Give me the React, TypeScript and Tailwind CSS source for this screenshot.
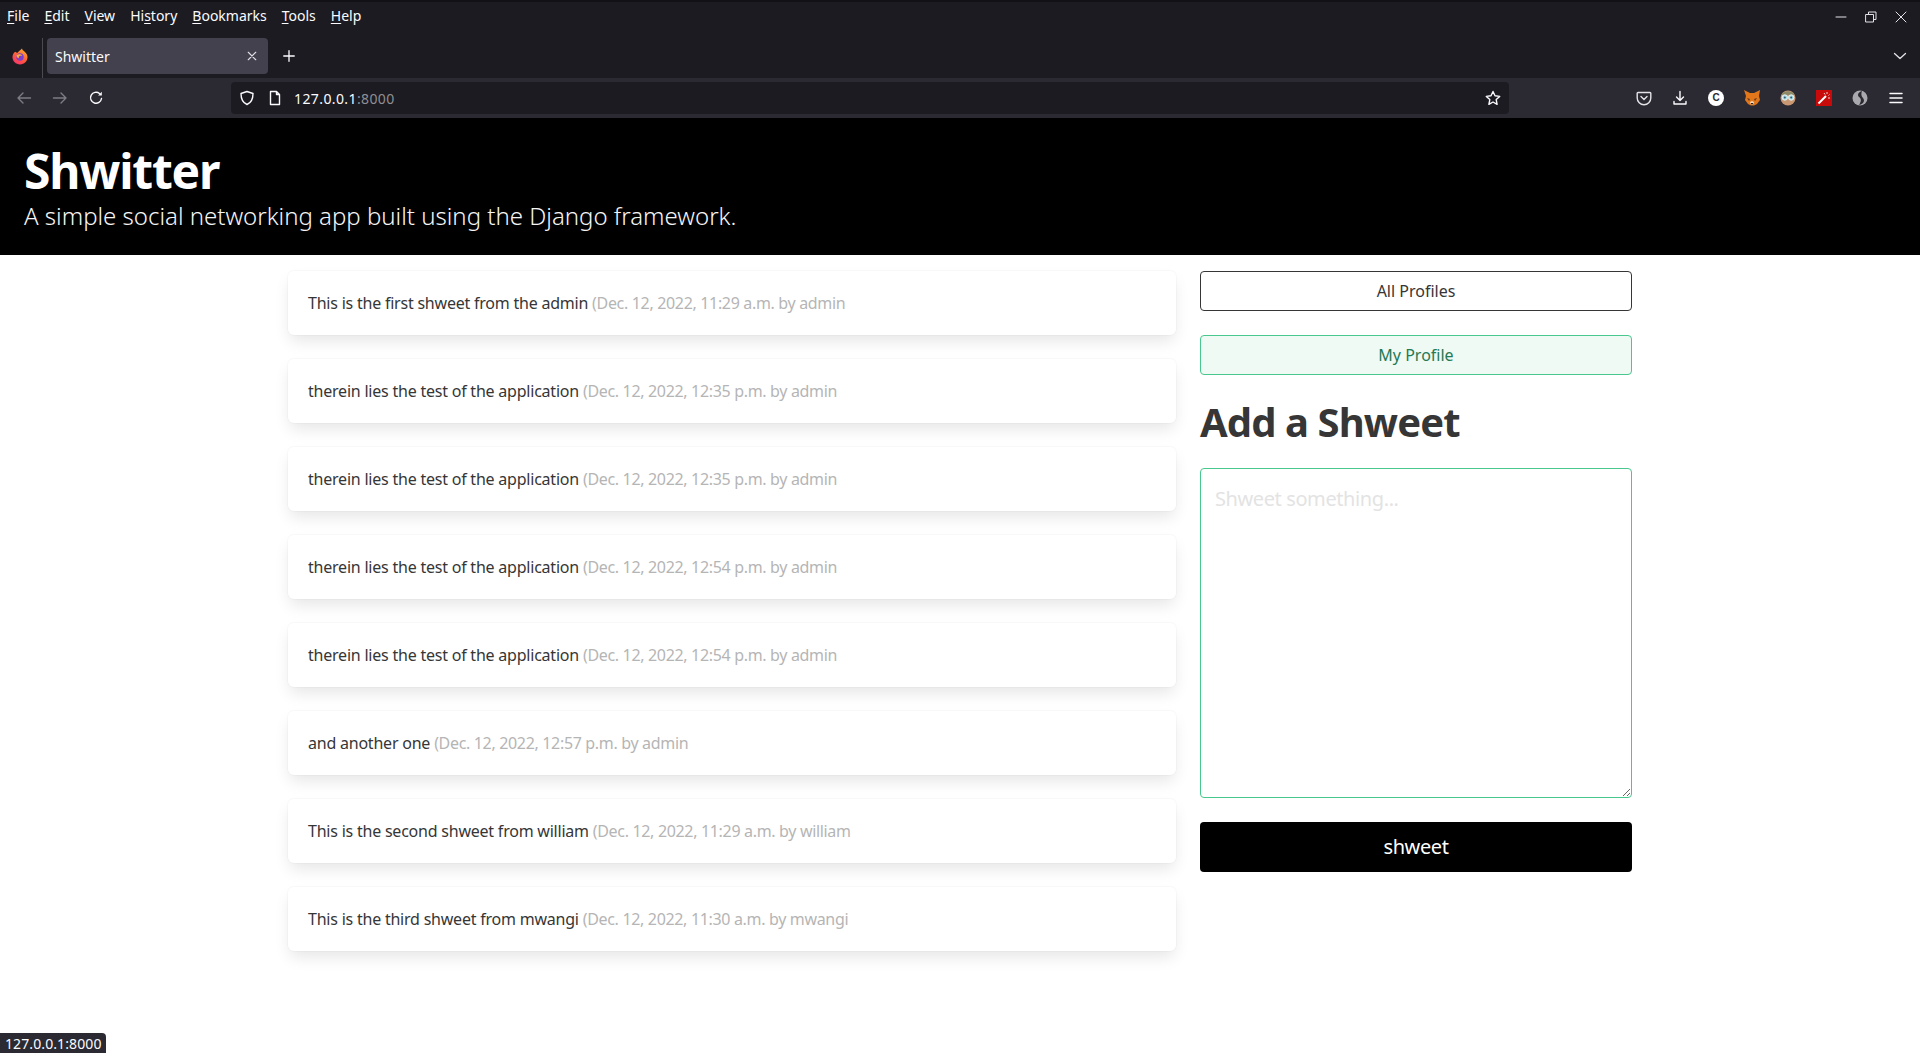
const menus = [
  { before: '', key: 'F', after: 'ile' },
  { before: '', key: 'E', after: 'dit' },
  { before: '', key: 'V', after: 'iew' },
  { before: 'Hi', key: 's', after: 'tory' },
  { before: '', key: 'B', after: 'ookmarks' },
  { before: '', key: 'T', after: 'ools' },
  { before: '', key: 'H', after: 'elp' },
];

const shweets = [
  { text: 'This is the first shweet from the admin', meta: '(Dec. 12, 2022, 11:29 a.m. by admin' },
  { text: 'therein lies the test of the application', meta: '(Dec. 12, 2022, 12:35 p.m. by admin' },
  { text: 'therein lies the test of the application', meta: '(Dec. 12, 2022, 12:35 p.m. by admin' },
  { text: 'therein lies the test of the application', meta: '(Dec. 12, 2022, 12:54 p.m. by admin' },
  { text: 'therein lies the test of the application', meta: '(Dec. 12, 2022, 12:54 p.m. by admin' },
  { text: 'and another one', meta: '(Dec. 12, 2022, 12:57 p.m. by admin' },
  { text: 'This is the second shweet from william', meta: '(Dec. 12, 2022, 11:29 a.m. by william' },
  { text: 'This is the third shweet from mwangi', meta: '(Dec. 12, 2022, 11:30 a.m. by mwangi' },
];

const Stroke = ({ children, size = 16, color = '#fbfbfe', width = 1.4 }: { children: React.ReactNode; size?: number; color?: string; width?: number }) => (
  <svg width={size} height={size} viewBox="0 0 16 16" fill="none" stroke={color} strokeWidth={width} strokeLinecap="round" strokeLinejoin="round">
    {children}
  </svg>
);

const FirefoxLogo = () => (
  <svg width="16" height="17" viewBox="0 0 16 17">
    <defs>
      <linearGradient id="ffBody" x1="0.8" y1="0" x2="0.2" y2="1">
        <stop offset="0%" stopColor="#ffb02e" />
        <stop offset="55%" stopColor="#ff5a3c" />
        <stop offset="100%" stopColor="#f5326e" />
      </linearGradient>
    </defs>
    <path d="M10 0.5c.3 1.5 1.2 2 2.4 3 1.8 1.5 3.1 3.2 3.1 5.6 0 4.2-3.3 7.4-7.5 7.4S.5 13.3.5 9.1C.5 6.6 1.7 4.6 3.4 3.7c.6.7 1.2 1 2.2 1 .8-1.6 2.7-2.2 4.4-4.2z" fill="url(#ffBody)" />
    <circle cx="8" cy="9" r="3.7" fill="#7b3fd0" />
    <path d="M4.6 7c1.6-1.2 4.6-1.2 5.6.6-1 .3-2.3.1-3 .6-.6.4-.7 1.500.1 2.100-1.500.1-3.200-1.500-2.700-3.300z" fill="#ffb02e" />
  </svg>
);

const Fox = () => (
  <svg width="16" height="16" viewBox="0 0 16 16">
    <path d="M0 0l6 3h4l6-3-1 6 1 4-3 4-3 1.500H7L4 14l-3-4 1-4z" fill="#e2761b" />
    <path d="M3 8l3 1-1 2zM13 8l-3 1 1 2z" fill="#5c3a1c" />
    <path d="M6 12l2-1 2 1-1 2.500H7z" fill="#f3d9bd" />
    <path d="M7 13h2v1.200H7z" fill="#23262a" />
  </svg>
);

const Glasses = () => (
  <svg width="16" height="16" viewBox="0 0 16 16">
    <circle cx="8" cy="8" r="7.500" fill="#c99872" />
    <path d="M1.500 5a7.500 7.500 0 0 1 13 0z" fill="#8c8a66" />
    <circle cx="4.800" cy="7.500" r="2.700" fill="#a8dbe4" stroke="#e8f3f5" />
    <circle cx="11.200" cy="7.500" r="2.700" fill="#a8dbe4" stroke="#e8f3f5" />
    <circle cx="4.800" cy="7.500" r="1" fill="#36596a" />
    <circle cx="11.200" cy="7.500" r="1" fill="#36596a" />
  </svg>
);

const Wand = () => (
  <svg width="16" height="16" viewBox="0 0 16 16">
    <rect width="16" height="16" fill="#c80a0a" />
    <path d="M2.500 13.500L10 6" stroke="#fff" strokeWidth="2" />
    <path d="M11 2v2M13.500 4.500l-1 1M14 8h-2M8 3l1 1.500" stroke="#fff" strokeWidth="0.8" />
  </svg>
);

const Simplenote = () => (
  <svg width="16" height="16" viewBox="0 0 16 16">
    <circle cx="8" cy="8" r="7.500" fill="#a9a9ad" />
    <path d="M10 1c-4 1.500-5 4-3 6 2 1.500 3 3.500 0 8 5-1 6-4.500 4-7-2-2-2-4.500-1-7z" fill="#2b2a33" />
  </svg>
);

const GrammarlyC = () => (
  <span className="flex h-4 w-4 items-center justify-center rounded-full bg-white font-['Liberation_Sans',sans-serif] text-[10px] font-bold leading-none text-[#2b2a33]">
    C
  </span>
);

const TitleBar = () => (
  <div className="flex h-[38px] items-center justify-between border-t-2 border-[#121216] pb-[6px] pl-[7px] pr-[11px] text-[14px] text-[#fbfbfe]">
    <div className="flex gap-[15px] pb-[4px]">
      {menus.map((m) => (
        <span key={m.key + m.after}>
          {m.before}
          <span className="underline underline-offset-2">{m.key}</span>
          {m.after}
        </span>
      ))}
    </div>
    <div className="flex items-center gap-[14px]">
      <Stroke color="#e4e4e8" width={1}><path d="M3 8h10" /></Stroke>
      <Stroke color="#e4e4e8" width={1}>
        <rect x="3" y="5.500" width="7.500" height="7.500" />
        <path d="M5.500 5.500V3H13v7.500h-2.500" />
      </Stroke>
      <Stroke color="#e4e4e8" width={1}><path d="M3 3l10 10M13 3L3 13" /></Stroke>
    </div>
  </div>
);

const TabBar = () => (
  <div className="flex h-[40px] items-start pr-[12px]">
    <div className="flex h-full w-[43px] items-center justify-center border-r border-[#4a4a52] pb-[4px] pr-[2px]">
      <FirefoxLogo />
    </div>
    <div className="ml-[4px] flex h-[36px] w-[221px] items-center justify-between rounded-[4px] bg-[#42414d] pl-[8px] pr-[10px] text-[14px] text-[#fbfbfe]">
      <span>Shwitter</span>
      <Stroke size={12} color="#e0e0e6" width={1.5}><path d="M3 3l10 10M13 3L3 13" /></Stroke>
    </div>
    <div className="ml-[14px] flex h-[36px] items-center">
      <Stroke size={14} width={1.5}><path d="M8 2v12M2 8h12" /></Stroke>
    </div>
    <div className="ml-auto flex h-[36px] items-center">
      <Stroke size={16} color="#e4e4e8" width={1.3}><path d="M2.500 5.500L8 10.500l5.500-5" /></Stroke>
    </div>
  </div>
);

const NavBar = () => (
  <div className="flex h-[41px] items-center border-b border-black bg-[#2b2a33] pl-[16px] pr-[16px]">
    <div className="flex items-center gap-[20px]">
      <Stroke color="#7d7c84"><path d="M14.500 8H2M7 3L2 8l5 5" /></Stroke>
      <Stroke color="#7d7c84"><path d="M1.500 8H14M9 3l5 5-5 5" /></Stroke>
      <Stroke>
        <path d="M13.500 8.500a5.500 5.500 0 1 1-2-5" />
        <path d="M13.800 1.800v3.700h-3.700z" fill="#fbfbfe" stroke="none" />
      </Stroke>
    </div>
    <div className="ml-[127px] flex h-[32px] w-[1278px] shrink-0 items-center rounded-[4px] bg-[#1c1b22] pl-[8px] pr-[8px]">
      <Stroke><path d="M8 1.500l6 2c0 5-1 9-6 11-5-2-6-6-6-11z" /></Stroke>
      <span className="ml-[12px]">
        <Stroke><path d="M3.500 1.500h6l3 3v10h-9zM9.500 1.500v3h3" /></Stroke>
      </span>
      <span className="ml-[11px] text-[14px] tracking-[0.4px] text-[#fbfbfe]">
        127.0.0.1<span className="text-[#8f8f94]">:8000</span>
      </span>
      <span className="ml-auto">
        <Stroke><path d="M8 1.500l2 4.300 4.700.6-3.500 3.200.9 4.700L8 12l-4.100 2.300.9-4.700L1.300 6.400 6 5.800z" /></Stroke>
      </span>
    </div>
    <div className="ml-auto flex items-center gap-[20px]">
      <Stroke color="#e4e4e8"><path d="M2 2.500h12a.8.8 0 0 1 .8.8V8a6.800 6.800 0 0 1-13.600 0V3.300a.8.8 0 0 1 .8-.8zM5 6.500l3 3 3-3" /></Stroke>
      <Stroke><path d="M8 1.500v9M4.500 7L8 10.500 11.500 7M2 11.500v2.500h12v-2.500" /></Stroke>
      <GrammarlyC />
      <Fox />
      <Glasses />
      <Wand />
      <Simplenote />
      <Stroke width={1.5}><path d="M2 3.500h12M2 8h12M2 12.500h12" /></Stroke>
    </div>
  </div>
);

const App = () => {
  return (
    <div className="relative flex h-[1053px] flex-col overflow-hidden bg-white font-['Noto_Sans',sans-serif] text-[#363636]">
      <div className="bg-[#1c1b22]">
        <TitleBar />
        <TabBar />
      </div>
      <NavBar />

      <header className="h-[136px] bg-black pl-[24px] pt-[27px] text-white">
        <h1 className="text-[48px] font-bold leading-[50px] tracking-[-1.2px]">Shwitter</h1>
        <p className="mt-[5px] text-[24px] font-light leading-[30px] text-[#f5f5f5]">
          A simple social networking app built using the Django framework.
        </p>
      </header>

      <main className="ml-[288px] mt-[16px] flex w-[1344px] gap-[24px]">
        <div className="flex w-[888px] flex-col gap-[24px]">
          {shweets.map((s, i) => (
            <div
              key={i}
              className="h-[64px] rounded-[6px] bg-white p-[20px] text-[16px] leading-[24px] tracking-[-0.22px] shadow-[0_8px_16px_-2px_rgba(10,10,10,0.1),0_0_0_1px_rgba(10,10,10,0.02)]"
            >
              {s.text} <span className="tracking-[-0.33px] text-[#b5b5b5]">{s.meta}</span>
            </div>
          ))}
        </div>

        <aside className="flex w-[432px] flex-col">
          <button className="h-[40px] rounded-[4px] border border-[#363636] bg-white text-[16px] text-[#363636]">
            All Profiles
          </button>
          <button className="mt-[24px] h-[40px] rounded-[4px] border border-[#48c78e] bg-[#effaf5] text-[16px] text-[#257953]">
            My Profile
          </button>
          <h2 className="mt-[22px] text-[40px] font-bold leading-[50px] tracking-[-0.9px] text-[#363636]">Add a Shweet</h2>
          <textarea
            readOnly
            placeholder="Shweet something..."
            className="mt-[21px] h-[330px] resize-y rounded-[4px] border border-[#48c78e] bg-white px-[14px] pb-[14px] pt-[15px] text-[20px] leading-[30px] tracking-[-0.4px] outline-none placeholder:text-[#e3e3e3]"
          />
          <button className="mt-[24px] h-[50px] rounded-[4px] bg-black text-[20px] tracking-[-0.4px] text-white">shweet</button>
        </aside>
      </main>

      <div className="absolute bottom-0 left-0 flex h-[20px] w-[106px] items-center rounded-tr-[4px] bg-[#2b2a33] pl-[5px] text-[14px] tracking-[0.1px] text-[#fbfbfe]">
        127.0.0.1:8000
      </div>
    </div>
  );
};

export default App;
